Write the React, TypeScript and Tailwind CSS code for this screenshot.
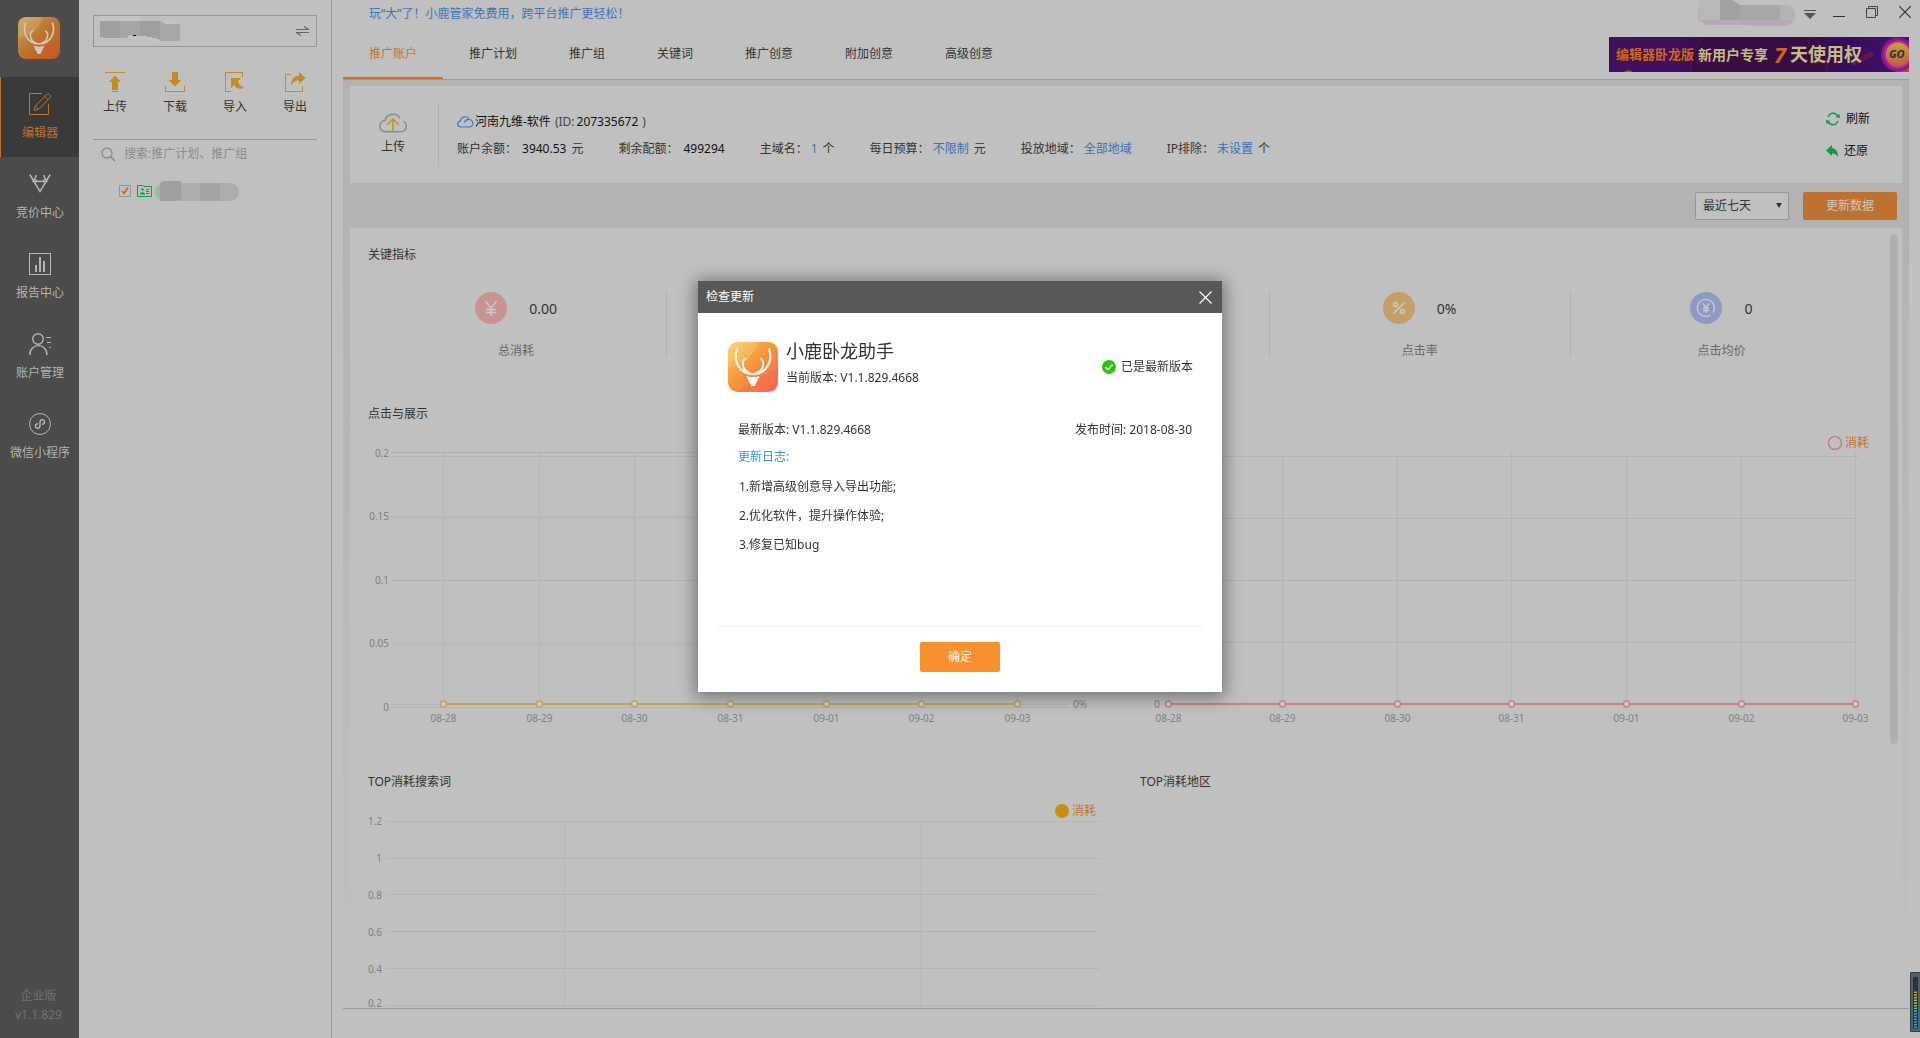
import React from "react";

const DATES = ["08-28", "08-29", "08-30", "08-31", "09-01", "09-02", "09-03"];
const CHART_W = 732;
const pct = (x: number) => `${(x / CHART_W) * 100}%`;

function DeerLogo({ id, dim, className }: { id: string; dim?: boolean; className: string }) {
  const stops = dim ? ["#c9a552", "#bd722f", "#bd6023"] : ["#ffcf61", "#f4933a", "#ff6a5f"];
  const line = dim ? "#d0c8c0" : "#ffffff";
  return (
    <svg viewBox="0 0 42 42" className={className} aria-hidden="true">
      <defs>
        <linearGradient id={id} x1="0" y1="0" x2="1" y2="1">
          <stop offset="0" stopColor={stops[0]} />
          <stop offset="0.5" stopColor={stops[1]} />
          <stop offset="1" stopColor={stops[2]} />
        </linearGradient>
        <clipPath id={`${id}-clip`}>
          <rect width="42" height="42" rx="8" />
        </clipPath>
      </defs>
      <g clipPath={`url(#${id}-clip)`}>
        <rect width="42" height="42" fill={`url(#${id})`} />
        <path d="M0 0H25C22 12 12 20 0 21Z" fill="#fff" opacity="0.12" />
        <path d="M42 22C32 26 16 34 8 42H42Z" fill="#e04020" opacity="0.14" />
      </g>
      <g fill="none" stroke={line} strokeLinecap="round">
        <path d="M7.500 6C4.500 15 8.500 26.500 21 27C33.500 26.500 37.500 15 34.500 6" strokeWidth="1.700" />
        <path d="M14.500 14C10.500 16.500 12.500 24 18 26M27.500 14C31.500 16.500 29.500 24 24 26" strokeWidth="1.500" />
      </g>
      <path d="M15.500 28.500C19 30 23 30 26.500 28.500L22.500 37H19.500Z" fill={line} />
    </svg>
  );
}

const navItems = [
  {
    label: "编辑器",
    active: true,
    icon: (
      <>
        <path d="M13 .5H.5V21.500H19.500V11" />
        <path d="M5 17.500L6.200 13.200L17.300 1.800C18.500.6 20 .8 20.900 1.700C21.800 2.600 21.800 4 20.800 5L9.500 16.200ZM6.500 13.200L9.500 16M15.800 3.500L19 6.700" />
      </>
    ),
  },
  {
    label: "竞价中心",
    icon: <path strokeWidth="1.500" d="M.8 1.500L11 18.500L21.200 1.500M3.500 8.500H18.500M7.500 2L5.500 6L8.500 8.500M14.500 2L16.500 6L13.500 8.500" />,
  },
  {
    label: "报告中心",
    icon: (
      <>
        <rect x=".5" y=".5" width="21" height="21" />
        <path strokeWidth="2" d="M7 12V19M11 4V19M15 8V19" />
      </>
    ),
  },
  {
    label: "账户管理",
    icon: (
      <>
        <circle cx="9" cy="6" r="5.300" strokeWidth="1.400" />
        <path strokeWidth="1.400" d="M.8 22C.8 9.500 18 9.500 18 22" />
        <path d="M17 4.500H22M18 9.500H22M20 14.500H22" />
      </>
    ),
  },
  {
    label: "微信小程序",
    icon: (
      <>
        <circle cx="11" cy="11" r="10.500" />
        <path strokeWidth="1.500" strokeLinecap="round" d="M8.500 10.800C5.500 11.500 6 15.200 8.500 15.200C10 15.200 11 14 11 12.500V9.500C11 8 12 6.800 13.500 6.800C16 6.800 16.500 10.500 13.500 11.200" />
      </>
    ),
  },
];

const tools = [
  {
    label: "上传",
    icon: <path d="M0 0H20V1H0ZM10 3.500L16 10H13V18H7V10H4ZM7 19H13V20H7Z" />,
  },
  {
    label: "下载",
    icon: <path d="M7 0H13V8H16.500L10 14.500L3.500 8H7ZM0 14H1V19H19V14H20V20H0Z" />,
  },
  {
    label: "导入",
    icon: <path d="M0 0H18V5.500H17V1H1V19H6V20H0ZM6 6H16L13 9C14 13 17 15 19.500 15.500C16 18 11 16.500 9 13L6 16Z" />,
  },
  {
    label: "导出",
    icon: <path d="M0 2H6V3H1V19H17V14H18V20H0ZM14 0L20.500 6L14 12V8.500C10 8.500 8 10 6 14C6 7 9.500 4 14 3.500Z" />,
  },
];

function Sidebar() {
  return (
    <nav className="flex w-[79px] shrink-0 flex-col bg-[#4b4b4b]">
      <div className="flex h-[77px] items-center pb-0.5 pl-[18px]">
        <DeerLogo id="side-logo" dim className="size-[42px]" />
      </div>
      {navItems.map((n) => (
        <button
          key={n.label}
          className={
            n.active
              ? "flex h-20 flex-col items-center border-l border-[#bd722f] bg-[#3a3a3a] pt-4 text-[#bd722f]"
              : "flex h-20 flex-col items-center border-l border-[#4b4b4b] pt-4 text-[#b4b4b4]"
          }
        >
          <svg width="22" height="22" viewBox="0 0 22 22" className="overflow-visible" fill="none" stroke="currentColor">
            {n.icon}
          </svg>
          <span className="mt-2 leading-5 whitespace-nowrap">{n.label}</span>
        </button>
      ))}
      <div className="mt-auto mb-3.5 pr-0.5 text-center leading-[19px] text-[#717171]">
        <p>企业版</p>
        <p>v1.1.829</p>
      </div>
    </nav>
  );
}

function AccountPanel() {
  return (
    <aside className="flex w-[253px] shrink-0 flex-col border-r border-[#969696] px-3.5 pt-[15px]">
      <button aria-label="切换账户" className="flex h-8 items-center justify-between border border-[#969696] pr-[7px] pl-1.5">
        <svg width="86" height="30" viewBox="0 0 86 30" shapeRendering="crispEdges">
          <path d="M0 1L10 -2H38L40 5H75V25H60L40 23H4L-3 18V6Z" fill="#c6c6c6" opacity=".6" />
          <path d="M0 5H20V22H5L0 21Z" fill="#9f9f9f" />
          <path d="M20 5H40V20H33L30 19L26 22H20Z" fill="#a6a6a6" />
          <path d="M40 5H60V24L54 22L45 20H40Z" fill="#9f9f9f" />
          <path d="M60 5L66 8H80V25H60Z" fill="#a8a8a8" />
          <path d="M33 19H36V20H33Z" fill="#111" />
        </svg>
        <svg width="13" height="10" viewBox="0 0 13 10" fill="none" stroke="#666" strokeWidth="1.200">
          <path d="M0 3.500H12.500L8 .5M13 6.500H.5L5 9.500" />
        </svg>
      </button>
      <div className="-mr-2 -ml-2 mt-[25px] flex">
        {tools.map((t) => (
          <button key={t.label} className="flex w-[60px] flex-col items-center text-[#333]">
            <svg width="20" height="20" viewBox="0 0 20 20" className="overflow-visible" fill="#c48c20">
              {t.icon}
            </svg>
            <span className="mt-1.5 leading-[18px]">{t.label}</span>
          </button>
        ))}
      </div>
      <label className="mt-[23px] flex h-[29px] items-center border-t border-[#969696] pl-2">
        <svg width="15" height="15" viewBox="0 0 15 15" fill="none" stroke="#8a8a8a" strokeWidth="1.300">
          <circle cx="6" cy="6" r="5" />
          <path d="M9.500 9.500L14 14" strokeWidth="1.600" />
        </svg>
        <input
          aria-label="搜索"
          placeholder="搜索:推广计划、推广组"
          className="ml-2 min-w-0 flex-1 bg-transparent outline-none placeholder:text-[#8c8c8c]"
        />
      </label>
      <label className="mt-[13px] flex h-5 items-center pl-[26px]">
        <span className="grid">
          <input
            type="checkbox"
            defaultChecked
            aria-label="选择账户"
            className="col-start-1 row-start-1 size-3 appearance-none border border-[#969696]"
          />
          <svg width="12" height="12" viewBox="0 0 12 12" className="pointer-events-none col-start-1 row-start-1" fill="none" stroke="#c4702c" strokeWidth="1.800">
            <path d="M3 6L5 8.500L9 2.500" />
          </svg>
        </span>
        <svg width="15" height="12" viewBox="0 0 15 12" className="ml-1.5" fill="none" stroke="#0f9f3c">
          <path d="M.5 .5H6L7 1.500H14.500V11.500H.5Z" />
          <path d="M9 4.500H12M9 6.500H12M9 8.500H12" />
          <path d="M5.500 3L7 4.500L5.500 6L4 4.500ZM3 9.500C3 6.500 8 6.500 8 9.500Z" fill="#0f9f3c" stroke="none" />
        </svg>
        <svg width="84" height="20" viewBox="0 0 84 20" className="ml-[3px]">
          <rect width="84" height="18" y="2" rx="9" fill="#adadad" />
          <path d="M6 2.500C-2 6-2 16 6 20Z" fill="#9bb8a3" />
          <path d="M5 2L8 0H26V18L20 20H5Z" fill="#9f9f9f" />
          <path d="M45 2H65V20H45Z" fill="#a4a4a4" />
        </svg>
      </label>
    </aside>
  );
}

const tabs = ["推广账户", "推广计划", "推广组", "关键词", "推广创意", "附加创意", "高级创意"];

function Banner() {
  return (
    <a
      href="#promo"
      className="relative mt-[9px] ml-auto flex h-[35px] w-[300px] items-center overflow-hidden bg-[#3d1060] pl-[7px] font-bold whitespace-nowrap text-[#c2bd83]"
    >
      <svg className="absolute inset-0" width="300" height="35" viewBox="0 0 300 35">
        <defs>
          <linearGradient id="ban" x1="0" x2="1">
            <stop offset="0" stopColor="#40115c" />
            <stop offset="0.2" stopColor="#40105c" />
            <stop offset="0.5" stopColor="#280a3a" />
            <stop offset="1" stopColor="#431070" />
          </linearGradient>
          <linearGradient id="go" x1="0" y1="0" x2="0" y2="1">
            <stop offset="0" stopColor="#c9a33c" />
            <stop offset="1" stopColor="#c2564c" />
          </linearGradient>
        </defs>
        <rect width="300" height="35" fill="url(#ban)" />
        <ellipse cx="150" cy="28" rx="68" ry="48" fill="#3a0c44" stroke="#5c1460" />
        <path d="M14 35L20 33L24 35ZM285 35L300 30V35Z" fill="#b0501c" />
        <path d="M240 27L262 14L266 18L246 29Z" fill="#5c1650" />
        <circle cx="289" cy="17.500" r="17" fill="#8c1590" />
        <circle cx="289" cy="17.500" r="14" fill="#b5308a" />
        <circle cx="289" cy="17.500" r="12" fill="url(#go)" />
      </svg>
      <span className="relative w-[82px] text-[13px] text-[#c9691c]">编辑器卧龙版</span>
      <span className="relative w-[76px] text-[14px]">新用户专享</span>
      <span className="relative w-[16px] text-[22px] text-[#c9691c] italic">7</span>
      <span className="relative w-[99px] text-[18px]">天使用权</span>
      <span className="relative text-[11px] text-[#333] italic">GO</span>
    </a>
  );
}

function Header() {
  return (
    <header>
      <div className="flex h-7 items-center pr-[9px] pl-[37px] text-[#555]">
        <a href="#news" className="mr-auto text-[#3f74ba]">玩“大”了！小鹿管家免费用，跨平台推广更轻松！</a>
        <svg width="98" height="28" viewBox="0 0 98 28" className="mr-2">
          <path d="M2 0H30L40 5H88C100 6 101 22 88 26H55L50 25H8L0 20Z" fill="#b5aab5" />
          <path d="M2 0H22V20H2Z" fill="#b9b9b9" />
          <path d="M22 0H34L42 5V20H22Z" fill="#a2a2a2" />
          <path d="M42 5H82V20H42Z" fill="#a8a8a8" />
          <path d="M82 5H88C96 6 99 14 96 20H82Z" fill="#b3b3b3" />
        </svg>
        <button aria-label="菜单" className="mr-[17px]">
          <svg width="12" height="9" viewBox="0 0 12 9" fill="currentColor">
            <path d="M0 0H12V1H0ZM0 3H12L6 9Z" />
          </svg>
        </button>
        <button aria-label="最小化" className="mr-[21px] pt-1">
          <svg width="12" height="1" viewBox="0 0 12 1" fill="#333">
            <path d="M0 0H12V1H0Z" />
          </svg>
        </button>
        <button aria-label="还原窗口" className="mr-[21px] mb-1">
          <svg width="12" height="12" viewBox="0 0 12 12" fill="none" stroke="#444">
            <path d="M.5 2.500H9.500V11.500H.5ZM2.500 2.500V.5H11.500V9.500H9.500" />
          </svg>
        </button>
        <button aria-label="关闭" className="mb-1">
          <svg width="12" height="12" viewBox="0 0 12 12" fill="none" stroke="#333" strokeWidth="1.200">
            <path d="M0 0L12 12M12 0L0 12" />
          </svg>
        </button>
      </div>
      <div className="mx-[11px] flex h-[52px] border-b border-[#9a9a9a]">
        {tabs.map((t, i) => (
          <button
            key={t}
            className={
              i === 0
                ? "border-b-2 border-[#c87429] px-[26px] pt-[3px] whitespace-nowrap text-[#c87429]"
                : "border-b-2 border-transparent px-[26px] pt-[3px] whitespace-nowrap text-[#333]"
            }
          >
            {t}
          </button>
        ))}
        <Banner />
      </div>
    </header>
  );
}

function Fact({ label, value, unit, link }: { label: string; value: string; unit?: string; link?: boolean }) {
  return (
    <div className={link ? "flex gap-[3px] whitespace-nowrap" : "flex gap-[5px] whitespace-nowrap"}>
      <dt>{label}：</dt>
      <dd className="flex gap-[5px]">
        {link ? (
          <a href="#edit" className="text-[#3a6fb8]">{value}</a>
        ) : (
          <span className="text-[#111]">{value}</span>
        )}
        {unit && <span>{unit}</span>}
      </dd>
    </div>
  );
}

function AccountCard() {
  return (
    <section className="flex h-[97px] shrink-0 items-center bg-[#c0c0c0] pr-8 text-[#333]">
      <button className="flex w-[88px] flex-col items-center pb-px pr-0.5">
        <svg width="28" height="20" viewBox="0 0 28 20" fill="none">
          <path d="M19 18.800H7C-1 18.500-1 8.500 6 7.500C8 0 18-1 21 5.500M24.500 8C29 11 28 18.500 22 18.800H17" stroke="#8b8b8b" strokeWidth="1.500" />
          <path d="M14 18V6M8 12L14 6L20 12" stroke="#c4960e" strokeWidth="1.500" />
        </svg>
        <span className="mt-1.5 leading-4">上传</span>
      </button>
      <div className="h-16 border-l border-[#b0b0b0]" />
      <div className="pt-0.5 pl-[18px]">
        <h2 className="flex items-center leading-[18px] text-[#111]">
          <svg width="17" height="12" viewBox="0 0 17 12" fill="none" stroke="#4678be" strokeWidth="1.200" className="mr-px">
            <path d="M4 11C-.5 10.500 0 5.500 3.500 4.800C4 .2 10.500-.8 12 3.500C16.500 3.500 17.500 10.500 12.500 11ZM7.500 6.500C8.500 4 10.500 3.300 12 3.500" />
          </svg>
          河南九维-软件
          <span className="mr-0.5 ml-1 text-[#444]">(ID:</span>
          207335672
          <span className="ml-1 text-[#444]">)</span>
        </h2>
        <dl className="mt-[9px] flex gap-[35px] leading-[18px]">
          <Fact label="账户余额" value="3940.53" unit="元" />
          <Fact label="剩余配额" value="499294" />
          <Fact label="主域名" value="1" unit="个" link />
          <Fact label="每日预算" value="不限制" unit="元" link />
          <Fact label="投放地域" value="全部地域" link />
          <Fact label="IP排除" value="未设置" unit="个" link />
        </dl>
      </div>
      <div className="ml-auto flex flex-col gap-3.5 text-[#111]">
        <button className="flex items-center gap-1.5 leading-[18px]">
          <svg width="14" height="14" viewBox="0 0 14 14" fill="none" stroke="#129c3e" strokeWidth="1.500">
            <path d="M2 5C4 0 10 0 12 4.500M12 9C10 14 4 14 2 9.500" />
            <path d="M9.500 5L14 6L13.500 2ZM4.500 9L0 8L.5 12Z" fill="#129c3e" stroke="none" />
          </svg>
          刷新
        </button>
        <button className="flex items-center gap-1.5 leading-[18px]">
          <svg width="12" height="12" viewBox="0 0 12 12" fill="#129c3e">
            <path d="M0 5.500L6 0V3C10 3.500 12 7 12 12C10.500 9.500 9 8.500 6 8.500V11Z" />
          </svg>
          还原
        </button>
      </div>
    </section>
  );
}

const metrics = [
  { label: "总消耗", value: "0.00", fill: "#c79393", glyph: <path d="M10.500 9L16 16.500L21.500 9M16 16.500V24M11 17.500H21M11 20.500H21" /> },
  null,
  null,
  {
    label: "点击率",
    value: "0%",
    fill: "#c4a068",
    glyph: (
      <>
        <path d="M21.500 10.500L10.500 21.500" />
        <circle cx="12.500" cy="12.500" r="2" />
        <circle cx="19.500" cy="19.500" r="2" />
      </>
    ),
  },
  {
    label: "点击均价",
    value: "0",
    fill: "#8d9ac4",
    glyph: (
      <>
        <path d="M20.500 23A8.500 8.500 0 1 1 23 20.500" />
        <path d="M13 11.500L16 15.500L19 11.500M16 15.500V21M13 16H19M13 18.500H19" />
      </>
    ),
  },
];

function Metrics() {
  return (
    <ul className="mt-7 -ml-0.5 grid grid-cols-5">
      {metrics.map((m, i) => (
        <li key={i} className="h-16 border-r border-[#b2b2b2] text-center last:border-r-0">
          {m && (
            <>
              <div className="flex items-center justify-center gap-[22px] text-[14px] text-[#333]">
                <svg width="32" height="32" viewBox="0 0 32 32" fill="none" stroke="#d0cccc" strokeWidth="1.300">
                  <circle cx="16" cy="16" r="16" fill={m.fill} stroke="none" />
                  {m.glyph}
                </svg>
                {m.value}
              </div>
              <p className="mt-5 leading-[14px] text-[#666]">{m.label}</p>
            </>
          )}
        </li>
      ))}
    </ul>
  );
}

type Label = { text: string; y: number };

function Chart({
  className,
  xs,
  hs,
  left,
  right,
  labels,
  labelX,
  top,
  bottom,
  color,
  legend,
  endLabel,
}: {
  className: string;
  xs: number[];
  hs: number[];
  left: number;
  right: number;
  labels: Label[];
  labelX: number;
  top: number;
  bottom: number;
  color?: string;
  legend?: { x: number; y: number; solid?: boolean };
  endLabel?: string;
}) {
  return (
    <svg className={className} fontSize="10" fill="#808080">
      <g stroke="#b5b5b5">
        {hs.map((y) => (
          <line key={y} x1={pct(left)} x2={pct(right)} y1={y} y2={y} />
        ))}
        {xs.map((x) => (
          <line key={x} x1={pct(x)} x2={pct(x)} y1={top} y2={bottom} />
        ))}
      </g>
      {labels.map((l) => (
        <text key={l.text} x={pct(labelX)} y={l.y + 4} textAnchor="end">{l.text}</text>
      ))}
      {color && (
        <>
          <line x1={pct(xs[0])} x2={pct(xs[6])} y1="281" y2="281" stroke={color} strokeWidth="2" />
          {xs.map((x, i) => (
            <g key={x}>
              <circle cx={pct(x)} cy="281" r="3" fill="#d0cccb" stroke={color} strokeWidth="1.500" />
              <text x={pct(x)} y="299" textAnchor="middle">{DATES[i]}</text>
            </g>
          ))}
        </>
      )}
      {endLabel && <text x={pct(right + 5)} y="285">{endLabel}</text>}
      {legend && (
        <>
          <circle
            cx={pct(legend.x)}
            cy={legend.y}
            r={legend.solid ? 7 : 6.500}
            fill={legend.solid ? "#c68f0f" : "none"}
            stroke={legend.solid ? "none" : "#c97f7f"}
            strokeWidth="1.500"
          />
          <text x={pct(legend.x + 10)} y={legend.y + 4} fontSize="12" fill="#c4732c">消耗</text>
        </>
      )}
    </svg>
  );
}

function Dashboard() {
  return (
    <section className="relative min-h-0 flex-1 overflow-hidden bg-[#c0c0c0] pt-4 pr-[30px] pl-[18px] text-[#333]">
      <h2 className="h-5 leading-[22px]">关键指标</h2>
      <Metrics />
      <div className="mt-[47px] grid grid-cols-2 gap-x-10">
        <div>
          <h2 className="h-5 leading-[22px]">点击与展示</h2>
          <Chart
            className="h-[308px] w-full overflow-visible"
            xs={[75.5, 171.5, 266.5, 362.5, 458.5, 553.5, 649.5]}
            hs={[29.5, 33.5, 93.5, 95.5, 157.5, 219.5, 221.5, 281.5, 284.5]}
            left={23}
            right={700}
            labelX={21}
            labels={[
              { text: "0.2", y: 30 },
              { text: "0.15", y: 93 },
              { text: "0.1", y: 157 },
              { text: "0.05", y: 220 },
              { text: "0", y: 284 },
            ]}
            top={30}
            bottom={284}
            color="#c4a060"
            endLabel="0%"
          />
        </div>
        <div className="pt-5">
          <Chart
            className="h-[308px] w-full overflow-visible"
            xs={[28.5, 142.5, 257.5, 371.5, 486.5, 601.5, 715.5]}
            hs={[33.5, 95.5, 157.5, 219.5, 281.5]}
            left={23}
            right={719}
            labelX={20}
            labels={[{ text: "0", y: 281 }]}
            top={30}
            bottom={284}
            color="#c97f7f"
            legend={{ x: 695, y: 20 }}
          />
        </div>
        <div className="mt-10">
          <h2 className="h-5 leading-[22px]">TOP消耗搜索词</h2>
          <Chart
            className="h-[300px] w-full overflow-visible"
            xs={[196.5, 553.5]}
            hs={[30.5, 67.5, 103.5, 140.5, 177.5, 214.5]}
            left={18}
            right={732}
            labelX={14}
            labels={[
              { text: "1.2", y: 30 },
              { text: "1", y: 67 },
              { text: "0.8", y: 104 },
              { text: "0.6", y: 141 },
              { text: "0.4", y: 178 },
              { text: "0.2", y: 212 },
            ]}
            top={30}
            bottom={300}
            legend={{ x: 694, y: 20, solid: true }}
          />
        </div>
        <div className="mt-10">
          <h2 className="h-5 leading-[22px]">TOP消耗地区</h2>
        </div>
      </div>
      <div className="absolute top-1.5 right-1 h-[510px] w-2 rounded-full bg-[#b0b0b0]" />
    </section>
  );
}

function LevelMeter() {
  const colors = ["#3b3a3c", "#3b3a3c", "#3b3a3c", "#3b3a3c", "#c8a41e", "#d2b11e", "#c8bd20", "#b4c22a", "#9cc83c", "#7cc860", "#5cc88c", "#3cb4c8"];
  return (
    <svg width="10" height="60" viewBox="0 0 10 60" className="absolute right-0 bottom-1.5">
      <rect width="12" height="60" rx="1" fill="#333b42" />
      <rect x="1" y="1" width="10" height="58" fill="#51606b" />
      <rect x="3" y="5" width="5" height="52" rx="1" fill="#2b3036" />
      {Array.from({ length: 18 }, (_, i) => (
        <rect key={i} x="4" y={6 + (i + 1) * 2.700} width="3" height="1.500" fill={colors[i] ?? "#27a4e0"} />
      ))}
    </svg>
  );
}

function UpdateDialog() {
  return (
    <div className="fixed inset-0 flex items-center justify-center pb-[66px]">
      <div
        role="dialog"
        aria-modal="true"
        aria-labelledby="dialog-title"
        className="flex w-[524px] flex-col bg-white text-[#333] shadow-[0_2px_16px_3px_rgba(0,0,0,0.4)]"
      >
        <div className="flex h-8 items-center justify-between bg-[#585858] pt-px pr-2.5 pl-2 text-white">
          <h1 id="dialog-title">检查更新</h1>
          <button aria-label="关闭对话框">
            <svg width="13" height="13" viewBox="0 0 13 13" fill="none" stroke="currentColor" strokeWidth="1.200">
              <path d="M.5 .5L12.500 12.500M12.500 .5L.5 12.500" />
            </svg>
          </button>
        </div>
        <div className="flex items-center pt-[29px] pr-[29px] pl-[30px]">
          <DeerLogo id="dialog-logo" className="size-[50px]" />
          <div className="ml-2">
            <p className="-mt-2 text-[18px] leading-[30px]">小鹿卧龙助手</p>
            <p className="leading-6">当前版本: V1.1.829.4668</p>
          </div>
          <p className="ml-auto flex items-center gap-[5px]">
            <svg width="14" height="14" viewBox="0 0 14 14">
              <circle cx="7" cy="7" r="7" fill="#2cc510" />
              <path d="M3.500 7.200L6 9.700L10.500 4.500" fill="none" stroke="#fff" strokeWidth="1.500" />
            </svg>
            已是最新版本
          </p>
        </div>
        <div className="flex justify-between pt-6 pr-[30px] pl-10 leading-[27px]">
          <p>最新版本: V1.1.829.4668</p>
          <p>发布时间: 2018-08-30</p>
        </div>
        <p className="pl-10 leading-[27px] text-[#3a90ee]">更新日志:</p>
        <ol className="h-[156px] pt-0.5 pl-[41px] leading-[29px]">
          <li>1.新增高级创意导入导出功能;</li>
          <li>2.优化软件，提升操作体验;</li>
          <li>3.修复已知bug</li>
        </ol>
        <div className="mx-5 flex justify-center border-t border-[#ececec] pt-[15px] pb-5">
          <button className="h-[30px] w-20 rounded-xs bg-[#f9902f] text-white">确定</button>
        </div>
      </div>
    </div>
  );
}

export default function App() {
  return (
    <div className="relative flex h-screen overflow-hidden bg-[#c0c0c0] font-['Noto_Sans','Noto_Sans_CJK_SC',sans-serif] text-[12px]">
      <Sidebar />
      <AccountPanel />
      <main className="flex min-w-0 flex-1 flex-col">
        <Header />
        <div className="mx-[11px] mb-[29px] flex min-h-0 flex-1 flex-col border-b border-[#999] bg-linear-to-b from-[#b3b3b3] from-15% to-[#c0c0c0] px-[7px] pt-1.5">
          <AccountCard />
          <div className="flex h-[45px] shrink-0 items-center justify-end gap-3.5 pr-[5px]">
            <div className="grid items-center">
              <select
                aria-label="时间范围"
                className="col-start-1 row-start-1 h-7 w-[94px] appearance-none rounded-xs border border-[#969696] bg-[#c0c0c0] pl-[7px] text-[#333]"
              >
                <option>最近七天</option>
              </select>
              <svg width="6" height="5" viewBox="0 0 6 5" className="pointer-events-none col-start-1 row-start-1 mr-[7px] justify-self-end" fill="#333">
                <path d="M0 0H6L3 5Z" />
              </svg>
            </div>
            <button className="h-7 w-[94px] rounded-xs bg-[#bd722f] text-[#cfc6bf]">更新数据</button>
          </div>
          <Dashboard />
        </div>
      </main>
      <LevelMeter />
      <UpdateDialog />
    </div>
  );
}
